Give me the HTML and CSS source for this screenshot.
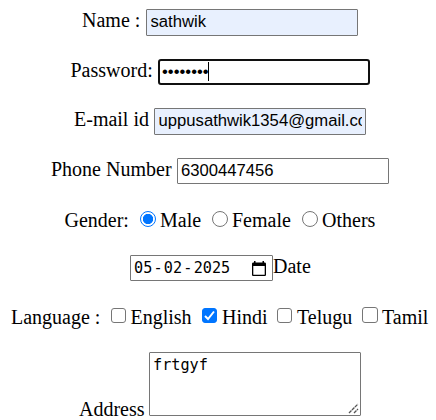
FILE: index.html
```html
<!DOCTYPE html>
<html lang="en">
<head>
<meta charset="utf-8">
<title>Form</title>
<link rel="stylesheet" href="styles.css">
</head>
<body>
<form class="form">
  <div class="row name"><label>Name :</label><input class="field filled" type="text" value="sathwik"></div>
  <div class="row password"><label>Password:</label><span class="secret"><input class="field active" type="password" value="sathwik1"><i class="caret"></i></span></div>
  <div class="row email"><label>E-mail id</label><input class="field filled" type="text" value="uppusathwik1354@gmail.com"></div>
  <div class="row phone"><label>Phone Number</label><input class="field short" type="text" value="6300447456"></div>
  <div class="row gender">
    <span class="title">Gender:</span>
    <label class="choice male"><input type="radio" name="gender" checked>Male</label>
    <label class="choice female"><input type="radio" name="gender">Female</label>
    <label class="choice others"><input type="radio" name="gender">Others</label>
  </div>
  <div class="row date">
    <div class="datebox"><span>05</span><span>-</span><span>02</span><span>-</span><span>2025</span>
      <svg class="calendar" width="14" height="15" viewBox="0 0 14 15"><path fill="#000" fill-rule="evenodd" d="M2 0h1.500v1.500h7V0H12v1.500h.7c.7 0 1.300.6 1.300 1.300v10.900c0 .7-.6 1.300-1.300 1.300H1.300C.6 15 0 14.400 0 13.700V2.800C0 2.100.6 1.500 1.300 1.500H2zM1.300 5v8.700h11.400V5z"/></svg>
    </div><label>Date</label>
  </div>
  <div class="row language">
    <span class="title">Language :</span>
    <label class="choice english"><input type="checkbox">English</label>
    <label class="choice hindi"><input type="checkbox" checked>Hindi</label>
    <label class="choice telugu"><input type="checkbox">Telugu</label>
    <label class="choice tamil"><input type="checkbox">Tamil</label>
  </div>
  <div class="row address"><label>Address</label>
    <div class="area"><textarea spellcheck="false">frtgyf</textarea>
      <svg class="grip" width="11" height="11" viewBox="0 0 11 11"><path d="M1 10L10 1M6 10l4-4" fill="none" stroke="#555" stroke-width="1.300" stroke-dasharray="3.500 .7"/></svg>
    </div>
  </div>
</form>
</body>
</html>
```
FILE: styles.css
```css
* { box-sizing: border-box; }
body {
  margin: 0;
  background: #fff;
  color: #000;
  font: 20px/24px "Liberation Serif", serif;
  overflow: hidden;
}
.form {
  display: grid;
  grid-template-rows: 50px 49px 50px 51px 46px 51px 47px 65px;
  padding-top: 8px;
}
.row { display: flex; align-items: flex-start; white-space: nowrap; }
.name { padding-left: 82px; }
.name label { width: 64px; }
.password { padding-left: 70.500px; }
.password label { width: 87.500px; }
.email { padding-left: 74px; }
.email label { width: 80px; }
.phone { padding-left: 51px; }
.phone label { width: 126px; }
.field {
  display: block;
  width: 212px;
  height: 27px;
  margin: 1px 0 0;
  padding: 0 3.500px 1px;
  border: 1px solid #767676;
  border-radius: 1px;
  outline: 0;
  background: #fff;
  color: #000;
  font: 16.67px "Liberation Sans", sans-serif;
}
.filled { background: #e8f0fe; }
.short { height: 26px; padding-left: 3px; }
.active { height: 26px; padding: 0 2px; border: 2px solid #101010; border-radius: 3px; }
.secret { position: relative; }
.caret { position: absolute; left: 50px; top: 4px; width: 1px; height: 19px; background: #000; }
.choice { display: flex; }
.choice input {
  appearance: none;
  flex: none;
  width: 16px;
  height: 16px;
  margin: 3px 5px 0 0;
  border: 1px solid #767676;
  background: #fff;
}
.choice input[type="radio"] { border-radius: 50%; }
.choice input[type="radio"]:checked {
  border: 1.5px solid #0075ff;
  background: radial-gradient(circle, #0075ff 0 4.8px, #fff 5.5px);
}
.choice input[type="checkbox"] { width: 15px; height: 15px; border-radius: 3px; }
.choice input[type="checkbox"]:checked {
  border-color: #0075ff;
  background: #0075ff url("data:image/svg+xml,%3Csvg xmlns='http://www.w3.org/2000/svg' viewBox='0 0 13 13'%3E%3Cpath d='M2 7l3 3 6-7.500' fill='none' stroke='white' stroke-width='2'/%3E%3C/svg%3E") center / 13px 13px no-repeat;
}
.gender { padding-left: 64.500px; }
.gender .title { width: 75px; }
.male { width: 72.500px; }
.female { width: 90px; }
.male input { margin-right: 4.500px; }
.gender .female input, .gender .others input { margin-right: 4px; }
.date { padding-left: 130px; }
.datebox {
  display: flex;
  width: 143px;
  height: 26px;
  margin-top: 1px;
  padding-left: 3px;
  border: 1px solid #767676;
  border-radius: 1px;
  font: 15.200px/24px "DejaVu Sans Mono", monospace;
}
.datebox span { margin-right: 1.200px; }
.calendar { margin: 5px 0 0 21px; }
.language { padding-left: 11px; }
.language .title { width: 100px; }
.english { width: 91px; }
.telugu input { margin-right: 5px; }
.language .english input { margin-right: 4.500px; }
.hindi { width: 75px; }
.telugu { width: 85px; }
.language .tamil input { width: 16px; height: 16px; margin-top: 2px; margin-right: 4px; }
.address { padding-left: 79px; }
.address label { width: 70px; padding-top: 45px; }
.area { position: relative; }
.grip { position: absolute; right: 2px; bottom: 2px; }
textarea {
  display: block;
  width: 212px;
  height: 64px;
  margin: 0;
  padding: 1px 3px;
  border: 1px solid #767676;
  border-radius: 1px;
  outline: 0;
  resize: none;
  font: 15.200px/22px "DejaVu Sans Mono", monospace;
}
```
